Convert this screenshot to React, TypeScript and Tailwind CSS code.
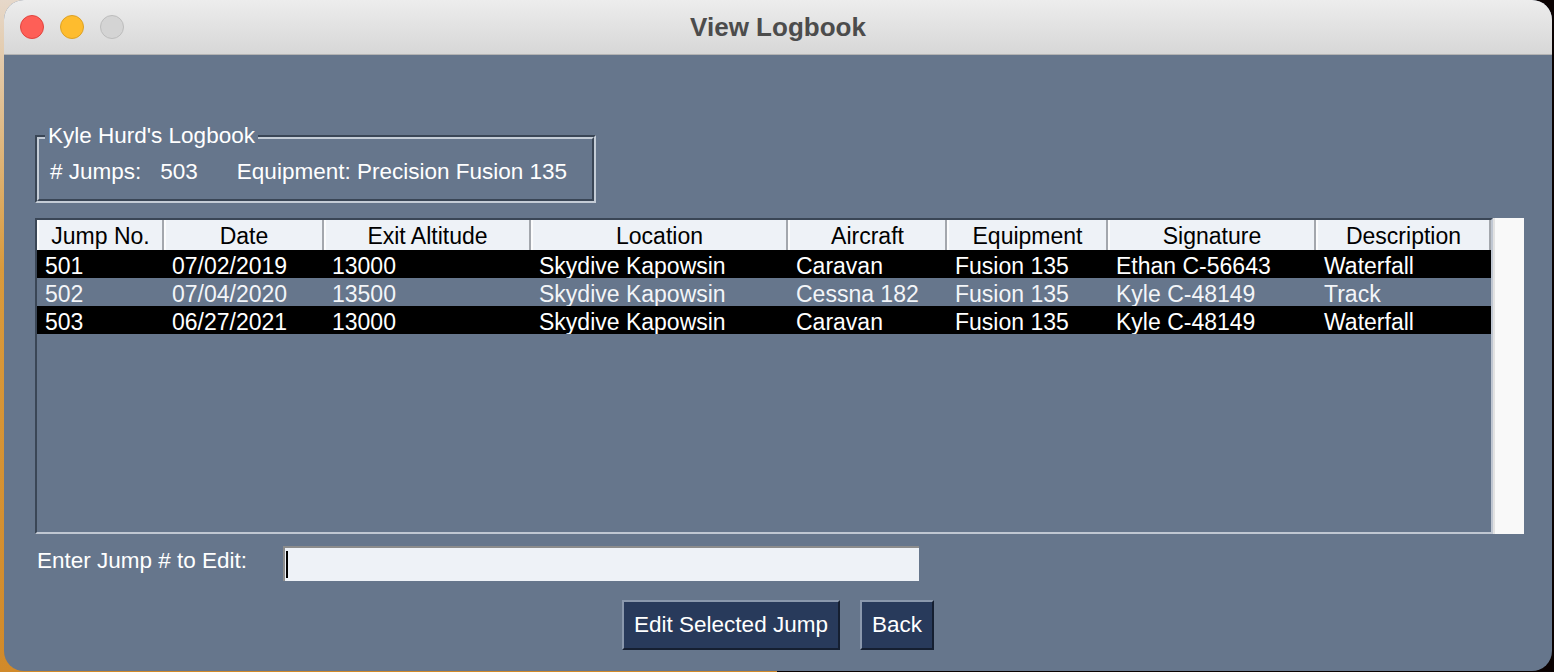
import React from 'react';

const columns = [
  { title: 'Jump No.', width: 'w-[127px]' },
  { title: 'Date', width: 'w-[160px]' },
  { title: 'Exit Altitude', width: 'w-[207px]' },
  { title: 'Location', width: 'w-[257px]' },
  { title: 'Aircraft', width: 'w-[159px]' },
  { title: 'Equipment', width: 'w-[161px]' },
  { title: 'Signature', width: 'w-[208px]' },
  { title: 'Description', width: 'w-[175px]' },
];

const jumps = [
  ['501', '07/02/2019', '13000', 'Skydive Kapowsin', 'Caravan', 'Fusion 135', 'Ethan C-56643', 'Waterfall'],
  ['502', '07/04/2020', '13500', 'Skydive Kapowsin', 'Cessna 182', 'Fusion 135', 'Kyle C-48149', 'Track'],
  ['503', '06/27/2021', '13000', 'Skydive Kapowsin', 'Caravan', 'Fusion 135', 'Kyle C-48149', 'Waterfall'],
];

function TitleBar() {
  return (
    <div className="relative flex h-[55px] shrink-0 items-center border-b border-[#b3b3b3] bg-gradient-to-b from-[#ededed] to-[#d7d7d7] pl-[16px]">
      <div className="flex gap-[16px]">
        <span className="h-[24px] w-[24px] rounded-full border border-[#e0443e] bg-[#fe5f57]" />
        <span className="h-[24px] w-[24px] rounded-full border border-[#dca125] bg-[#febc2e]" />
        <span className="h-[24px] w-[24px] rounded-full border border-[#bcbcbc] bg-[#d4d4d4]" />
      </div>
      <div className="absolute inset-0 flex items-center justify-center text-[26px] font-bold text-[#4c4c4c]">
        View Logbook
      </div>
    </div>
  );
}

function InfoGroup() {
  return (
    <div className="relative h-[68px] w-[561px] shrink-0 border-2 border-t-[#3a4656] border-l-[#3a4656] border-r-[#c4ccd6] border-b-[#c4ccd6] text-[22.5px]">
      <div className="h-full w-full border-2 border-t-[#c4ccd6] border-l-[#c4ccd6] border-r-[#3a4656] border-b-[#3a4656] pl-[11px] pt-[20px]">
        <div className="flex leading-[26px] text-white">
          <span># Jumps:</span>
          <span className="ml-[19px]">503</span>
          <span className="ml-[39px]">Equipment: Precision Fusion 135</span>
        </div>
      </div>
      <span className="absolute left-[8px] top-[-14px] bg-[#66768c] px-[3px] leading-[26px] text-white">
        Kyle Hurd's Logbook
      </span>
    </div>
  );
}

function JumpTable() {
  return (
    <div className="mt-[15px] flex h-[316px] shrink-0 text-[23px]">
      <div className="flex w-[1458px] shrink-0 flex-col border-2 border-t-[#3a4656] border-l-[#3a4656] border-r-[#c0c7d2] border-b-[#c0c7d2]">
        <div className="flex h-[30px] bg-[#eef2f7]">
          {columns.map((col) => (
            <div
              key={col.title}
              className={`${col.width} shrink-0 border-l-2 border-r-2 border-l-[#fbfcfd] border-r-[#a3a7ad] pt-[1px] text-center leading-[30px] text-black`}
            >
              {col.title}
            </div>
          ))}
        </div>
        {jumps.map((row, i) => (
          <div
            key={row[0]}
            className={`flex h-[28px] overflow-hidden ${i % 2 === 0 ? 'bg-black text-white' : 'text-[#f3f5f8]'}`}
          >
            {row.map((cell, j) => (
              <div key={j} className={`${columns[j].width} shrink-0 whitespace-nowrap pl-[8px] pt-[2px] leading-[28px]`}>
                {cell}
              </div>
            ))}
          </div>
        ))}
      </div>
      <div className="w-[31px] shrink-0 border-l-2 border-[#e2e2e2] bg-[#f9f9f9]" />
    </div>
  );
}

export default function App() {
  return (
    <div className="h-[672px] w-[1554px] overflow-hidden bg-[linear-gradient(to_right,transparent_50%,#0a0202_50%),linear-gradient(to_bottom,#e6d8ca,#d99a3c_40%,#d18a2a)] pl-[4px] font-['Liberation_Sans',Arial,sans-serif] text-[22.5px]">
      <div className="flex h-[671px] w-[1548px] flex-col overflow-hidden rounded-[20px] bg-[#66768c]">
        <TitleBar />
        <div className="flex flex-1 flex-col pl-[31px] pr-[31px] pt-[80px]">
          <InfoGroup />
          <JumpTable />

          <div className="mt-[12px] flex items-start">
            <span className="w-[246px] shrink-0 pl-[2px] pt-[2px] leading-[26px] text-white">
              Enter Jump # to Edit:
            </span>
            <div className="ml-[2px] flex h-[35px] w-[636px] items-center border-l-2 border-t-2 border-[#8c8c8c] bg-[#eef2f7] pl-[1px]">
              <span className="h-[27px] w-[2px] bg-black" />
            </div>
          </div>

          <div className="mt-[19px] flex justify-center gap-[20px]">
            <button className="h-[50px] w-[218px] border-2 border-t-[#8a98ad] border-l-[#8a98ad] border-r-[#151f31] border-b-[#151f31] bg-[#283a5b] leading-[26px] text-white">
              Edit Selected Jump
            </button>
            <button className="h-[50px] w-[74px] border-2 border-t-[#8a98ad] border-l-[#8a98ad] border-r-[#151f31] border-b-[#151f31] bg-[#283a5b] leading-[26px] text-white">
              Back
            </button>
          </div>
        </div>
      </div>
    </div>
  );
}
